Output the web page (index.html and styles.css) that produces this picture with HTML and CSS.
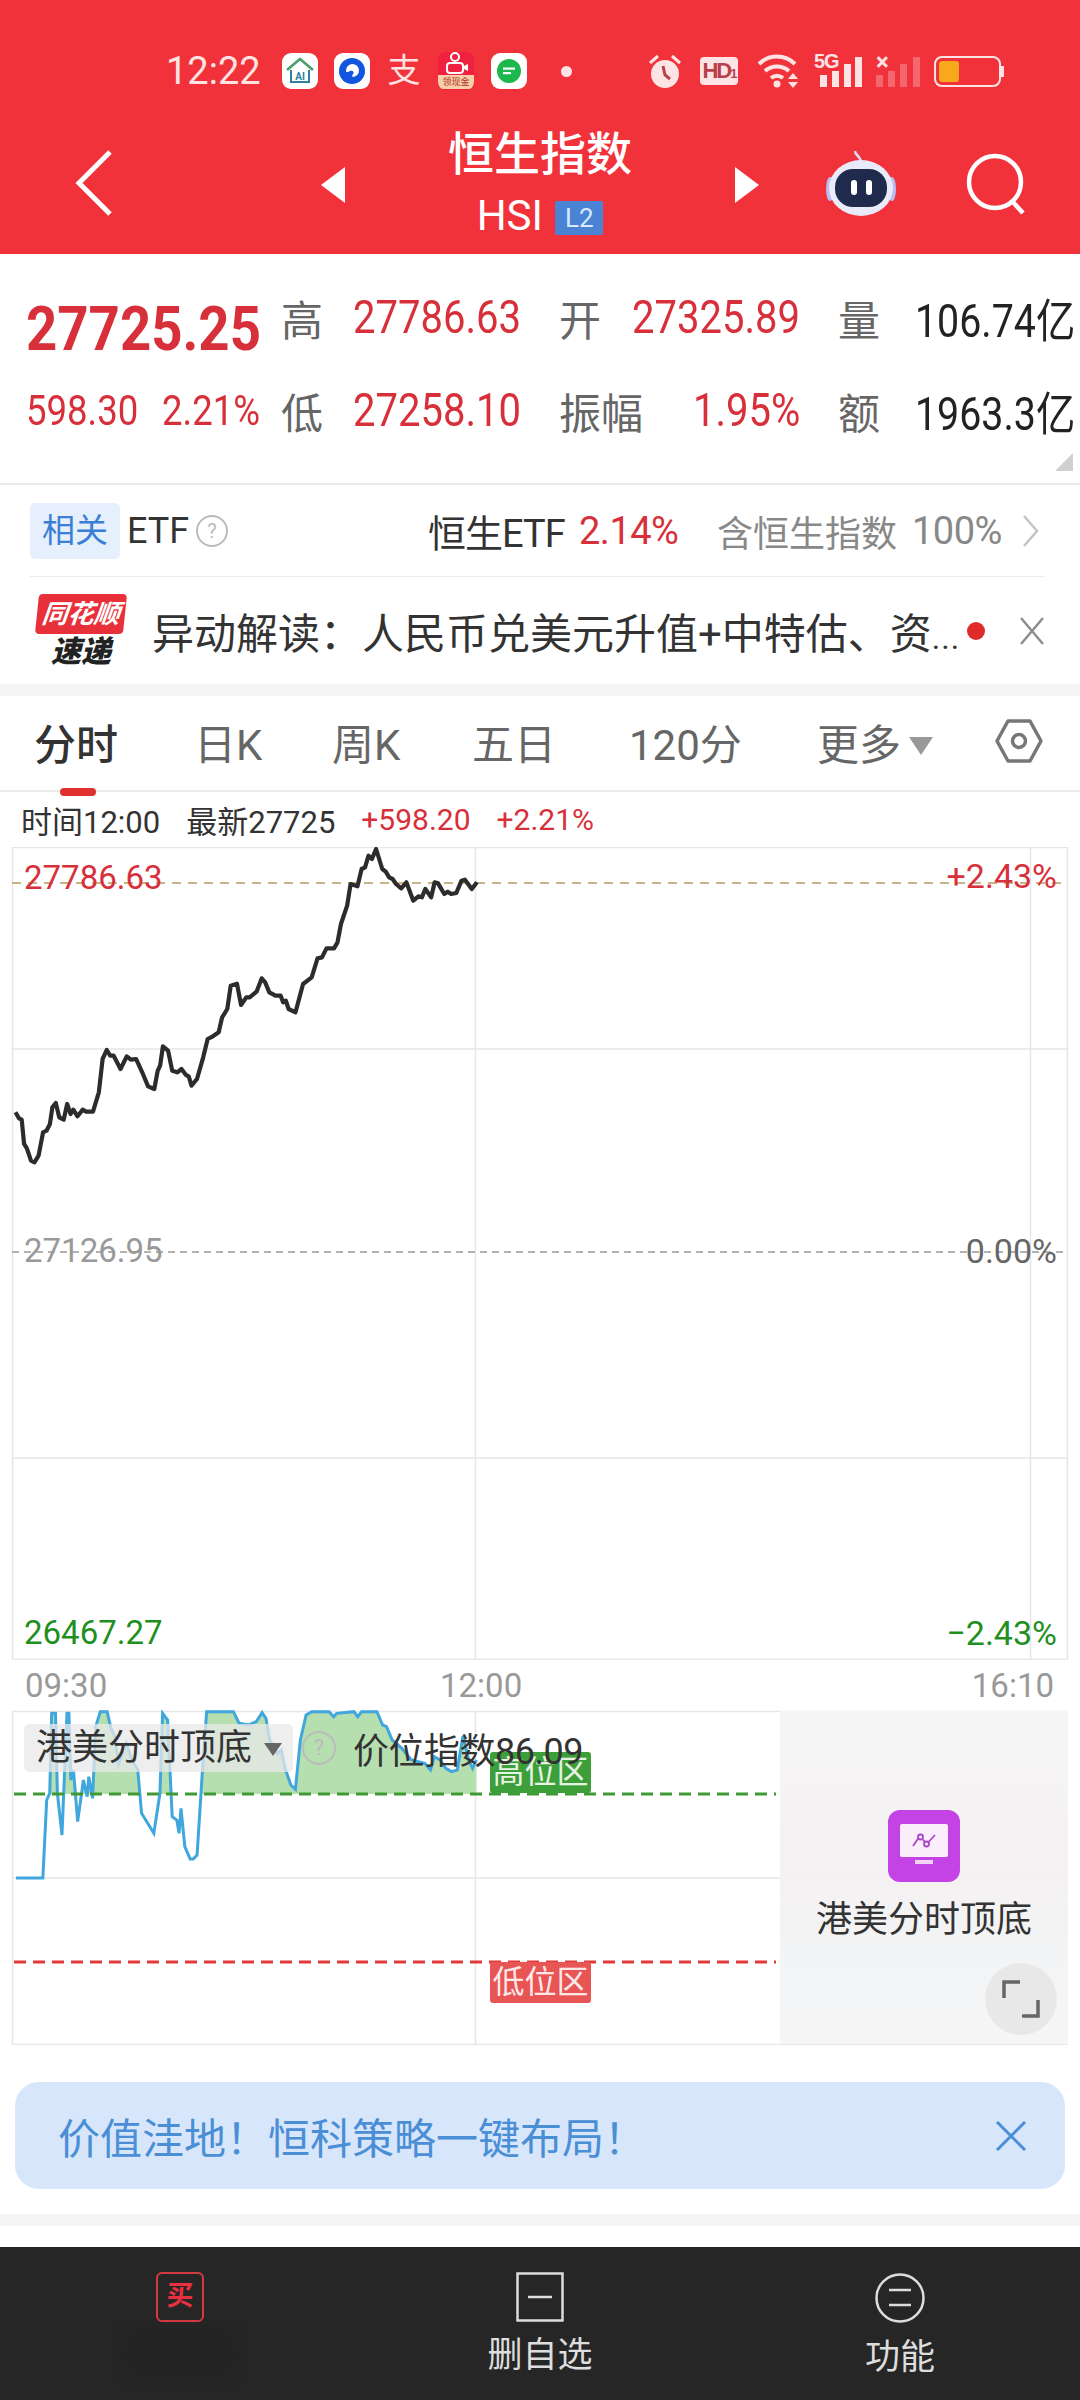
FILE: index.html
```html
<!DOCTYPE html>
<html lang="zh-CN">
<head>
  <meta charset="UTF-8" />
  <meta name="viewport" content="width=device-width, initial-scale=1.0"/>
  <title>恒生指数</title>
  <link rel="stylesheet" href="styles.css">
</head>
<body>

<div class="phone">

  <header class="header">
    <div class="status-bar">
      <span class="clock">12:22</span>
      <div class="notify-icons">
        <span class="app-tile">
          <svg width="30" height="30" viewBox="0 0 30 30"><path d="M2 14 15 3l13 11" fill="none" stroke="#4aa267" stroke-width="2.6"/><path d="M6 14v12h18V14" fill="none" stroke="#2f7f9e" stroke-width="2"/><text x="15" y="24" class="app-ai">AI</text></svg>
        </span>
        <span class="app-tile">
          <svg width="30" height="30" viewBox="0 0 30 30"><circle cx="15" cy="15" r="13" fill="#1256e0"/><path d="M9 15a6.500 6.500 0 1 1 7 6c-1 0-1-2 0-3 2-2-1-4-3-3-2 1-4 2-4 0z" fill="#fff"/></svg>
        </span>
        <span class="alipay">支</span>
        <span class="kuaishou">
          <svg width="30" height="22" viewBox="0 0 30 22"><circle cx="14" cy="5" r="4" fill="none" stroke="#fff" stroke-width="2"/><rect x="6" y="11" width="16" height="10" rx="3" fill="none" stroke="#fff" stroke-width="2"/><path d="m23 14 4-2v7l-4-2z" fill="#fff"/></svg>
          <span class="kuaishou-band">领现金</span>
        </span>
        <span class="app-tile">
          <svg width="30" height="30" viewBox="0 0 30 30"><circle cx="15" cy="15" r="12" fill="#1cb84d"/><rect x="9" y="11.500" width="12" height="2.200" fill="#fff"/><rect x="9" y="16" width="8" height="2.200" fill="#fff"/></svg>
        </span>
        <span class="notify-dot"></span>
      </div>
      <div class="system-icons">
        <svg class="sys-alarm" width="32" height="35" viewBox="0 0 32 35"><circle cx="16" cy="20" r="14" fill="#fde3e3"/><path d="M1 9 9 2M31 9l-8-7" stroke="#fde3e3" stroke-width="3"/><path d="M14 12l2 9 5 4" fill="none" stroke="#b8404a" stroke-width="3"/></svg>
        <span class="sys-hd">HD<small>1</small></span>
        <svg class="sys-wifi" width="43" height="34" viewBox="0 0 43 34"><path d="M2 10C12 0 28 0 38 10M8 17c7-6 17-6 24 0M14 24c4-3 8-3 12 0" fill="none" stroke="#fde3e3" stroke-width="4"/><circle cx="20" cy="30" r="3.500" fill="#fde3e3"/><path d="m36 19 5 6h-10zM36 34l5-6h-10z" fill="#fde3e3"/></svg>
        <span class="sys-signal">
          <span class="sys-5g">5G</span>
          <svg width="48" height="32" viewBox="0 0 48 32"><path d="M6 20h7v12H6zM18 16h7v16h-7zM30 9h7v23h-7zM41 2h7v30h-7z" fill="#fde3e3"/></svg>
        </span>
        <span class="sys-signal off">
          <span class="sys-x">×</span>
          <svg width="44" height="32" viewBox="0 0 44 32"><path d="M0 20h7v12H0zM12 16h7v16h-7zM24 9h7v23h-7zM37 2h7v30h-7z" fill="#fde3e3" opacity=".3"/></svg>
        </span>
        <span class="battery"><span class="battery-level"></span></span>
      </div>
    </div>

    <nav class="nav-bar">
      <svg class="nav-back" width="40" height="68" viewBox="0 0 40 68"><path d="M36 3 5 34l31 31" fill="none" stroke="#fff" stroke-width="5"/></svg>
      <svg class="nav-prev" width="24" height="36" viewBox="0 0 24 36"><path d="M24 0v36L0 18z" fill="#fff"/></svg>
      <div class="nav-title">
        <div class="nav-name">恒生指数</div>
        <div class="nav-code">HSI <span class="l2-badge">L2</span></div>
      </div>
      <svg class="nav-next" width="24" height="36" viewBox="0 0 24 36"><path d="M0 0v36l24-18z" fill="#fff"/></svg>
      <svg class="nav-robot" width="72" height="68" viewBox="0 0 72 68">
        <path d="M36 12C34 6 30 6 30 2" fill="none" stroke="#d8dcf5" stroke-width="2.500"/>
        <ellipse cx="5" cy="40" rx="4" ry="12" fill="#b9bef0"/>
        <ellipse cx="67" cy="40" rx="4" ry="12" fill="#b9bef0"/>
        <ellipse cx="36" cy="39" rx="32" ry="28" fill="#e9ebfb"/>
        <rect x="10" y="20" width="52" height="38" rx="18" fill="#1f2a4d"/>
        <rect x="26" y="31" width="6" height="15" rx="3" fill="#fff"/>
        <rect x="41" y="31" width="6" height="15" rx="3" fill="#fff"/>
      </svg>
      <svg class="nav-search" width="62" height="62" viewBox="0 0 62 62"><circle cx="29" cy="29" r="26" fill="none" stroke="#fff" stroke-width="4.500"/><path d="m46 48 11 12" stroke="#fff" stroke-width="4.500"/></svg>
    </nav>
  </header>

  <section class="quote">
    <div class="quote-row">
      <span class="price">27725.25</span>
      <span class="q-label">高</span>
      <span class="q-value up">27786.63</span>
      <span class="q-wide"><span class="q-label">开</span><span class="q-value up">27325.89</span></span>
      <span class="q-label q-third">量</span>
      <span class="q-value dark">106.74亿</span>
    </div>
    <div class="quote-row">
      <span class="change"><span>598.30</span><span>2.21%</span></span>
      <span class="q-label">低</span>
      <span class="q-value up">27258.10</span>
      <span class="q-wide"><span class="q-label">振幅</span><span class="q-value up">1.95%</span></span>
      <span class="q-label q-third">额</span>
      <span class="q-value dark">1963.3亿</span>
    </div>
    <span class="corner-mark"></span>
  </section>

  <section class="etf-row">
    <span class="etf-badge">相关</span>
    <span class="etf-name">ETF</span>
    <span class="help-icon etf-help">?</span>
    <span class="etf-fund">恒生ETF</span>
    <span class="etf-pct">2.14%</span>
    <span class="etf-hold">含恒生指数</span>
    <span class="etf-share">100%</span>
    <svg width="18" height="34" viewBox="0 0 18 34"><path d="m2 2 13 15L2 32" fill="none" stroke="#c4c4c4" stroke-width="2.500"/></svg>
  </section>

  <section class="news-row">
    <div class="news-logo">
      <div class="news-logo-top"><span>同花顺</span></div>
      <div class="news-logo-bottom">速递</div>
    </div>
    <div class="news-text">异动解读：人民币兑美元升值+中特估、资<span class="dots">...</span></div>
    <span class="news-dot"></span>
    <svg class="news-close" width="26" height="28" viewBox="0 0 26 28"><path d="m2 1 22 26M24 1 2 27" stroke="#8d8d8d" stroke-width="2.500"/></svg>
  </section>

  <div class="band"></div>

  <nav class="tabs">
    <span class="tab active">分时</span>
    <span class="tab tab-rik">日K</span>
    <span class="tab tab-zhouk">周K</span>
    <span class="tab tab-five">五日</span>
    <span class="tab tab-120">120分</span>
    <span class="tab tab-more">更多<i class="more-arrow"></i></span>
    <svg class="tab-setting" width="48" height="44" viewBox="0 0 48 44"><path d="M13 2h22l11 20-11 20H13L2 22z" fill="none" stroke="#777" stroke-width="3.500" stroke-linejoin="round"/><circle cx="24" cy="22" r="6.500" fill="none" stroke="#777" stroke-width="3.500"/></svg>
  </nav>

  <div class="info-row">
    <span class="info-dark">时间12:00</span>
    <span class="info-dark">最新27725</span>
    <span class="info-red">+598.20</span>
    <span class="info-red">+2.21%</span>
  </div>

  <section class="chart">
    <svg class="chart-svg" width="1080" height="813" viewBox="0 848 1080 813">
      <path d="M12.500 848.500H1067.500V1660.500H12.500Z" fill="none" stroke="#e6e6e6" stroke-width="1.500"/>
      <path d="M12 1050H1068M12 1459H1068M475.500 848V1661M1030.500 848V1661" stroke="#e6e6e6" stroke-width="1.500"/>
      <path d="M12 884H1068" stroke="#c9b48a" stroke-width="2" stroke-dasharray="9 7"/>
      <path d="M12 1253H1068" stroke="#999" stroke-width="1.500" stroke-dasharray="7 5"/>
      <g transform="translate(0 690) scale(.34439 .33333)">
        <polyline class="price-line" points="45,1270 55,1288 63,1292 70,1365 78,1378 90,1415 100,1420 112,1400 125,1330 135,1325 145,1305 152,1255 162,1242 172,1285 185,1292 195,1245 205,1275 213,1262 225,1282 240,1262 250,1268 270,1268 287,1210 298,1110 310,1083 320,1100 330,1100 350,1140 368,1102 380,1112 395,1110 415,1155 430,1192 448,1200 458,1145 465,1130 473,1072 488,1085 500,1145 515,1150 527,1140 540,1158 548,1162 556,1190 572,1170 590,1105 603,1050 618,1042 635,1030 645,985 660,960 670,890 688,884 700,948 715,925 725,925 745,908 760,868 770,880 782,910 800,920 815,920 822,940 830,935 838,960 858,970 880,885 905,865 922,808 935,805 948,778 970,778 980,760 990,705 1008,650 1018,585 1038,592 1050,540 1060,535 1070,500 1080,510 1092,480 1110,540 1120,548 1130,565 1140,570 1150,585 1165,598 1180,580 1200,635 1215,622 1225,625 1235,600 1252,625 1262,580 1272,583 1290,615 1300,608 1310,615 1325,612 1340,575 1350,572 1370,600 1385,580"/>
      </g>
    </svg>
    <span class="chart-label high-left">27786.63</span>
    <span class="chart-label high-right">+2.43%</span>
    <span class="chart-label mid-left">27126.95</span>
    <span class="chart-label mid-right">0.00%</span>
    <span class="chart-label low-left">26467.27</span>
    <span class="chart-label low-right">−2.43%</span>
  </section>

  <div class="time-axis">
    <span class="time-start">09:30</span>
    <span class="time-mid">12:00</span>
    <span>16:10</span>
  </div>

  <section class="sub-chart">
    <svg class="chart-svg" width="1080" height="335" viewBox="0 1710 1080 335">
      <path d="M12 1711.500H1068M12 1878H780M12 2044.500H1068M12.500 1711V2045M475.500 1711V2045" stroke="#e6e6e6" stroke-width="1.500"/>
      <g transform="translate(0 1660) scale(.38265 .33333)">
        <clipPath id="above-line"><rect x="0" y="0" width="1568" height="402"/></clipPath>
        <polygon class="sub-fill" clip-path="url(#above-line)" points="42,654 112,654 122,420 130,400 135,160 145,160 150,400 162,525 175,160 180,160 185,360 192,330 203,485 218,360 228,410 232,350 242,415 250,200 262,155 280,155 290,205 300,230 310,310 330,250 345,300 360,330 370,460 402,520 418,400 425,160 438,180 450,470 462,480 468,520 473,445 483,560 497,597 505,597 515,585 528,350 540,155 610,155 625,190 650,195 670,185 685,158 695,175 705,240 725,280 735,270 745,325 760,375 772,388 785,240 800,165 815,155 860,155 872,170 880,160 925,155 935,170 945,155 985,155 1000,195 1010,200 1025,240 1050,265 1075,300 1110,310 1125,330 1135,290 1150,300 1165,325 1180,335 1195,330 1210,228 1225,300 1235,325 1245,300 1245,402 42,402"/>
        <polyline class="sub-line" points="42,654 112,654 122,420 130,400 135,160 145,160 150,400 162,525 175,160 180,160 185,360 192,330 203,485 218,360 228,410 232,350 242,415 250,200 262,155 280,155 290,205 300,230 310,310 330,250 345,300 360,330 370,460 402,520 418,400 425,160 438,180 450,470 462,480 468,520 473,445 483,560 497,597 505,597 515,585 528,350 540,155 610,155 625,190 650,195 670,185 685,158 695,175 705,240 725,280 735,270 745,325 760,375 772,388 785,240 800,165 815,155 860,155 872,170 880,160 925,155 935,170 945,155 985,155 1000,195 1010,200 1025,240 1050,265 1075,300 1110,310 1125,330 1135,290 1150,300 1165,325 1180,335 1195,330 1210,228 1225,300 1235,325 1245,300"/>
      </g>
      <path d="M14 1794H776" stroke="#3f9a35" stroke-width="3" stroke-dasharray="12 7"/>
      <path d="M14 1962H776" stroke="#e23a3a" stroke-width="3" stroke-dasharray="12 7"/>
    </svg>

    <span class="zone zone-high">高位区</span>
    <span class="zone zone-low">低位区</span>
    <div class="sub-head">
      <span class="sub-pill">港美分时顶底<i class="pill-arrow"></i></span>
      <span class="help-icon sub-help">?</span>
      <span class="sub-index">价位指数86.09</span>
    </div>

    <aside class="promo">
      <span class="promo-icon">
        <svg width="48" height="44" viewBox="0 0 48 44">
          <rect x="0" y="0" width="48" height="33" rx="2" fill="#fbeffc"/>
          <rect x="15" y="36" width="18" height="4" fill="#f3d6f7"/>
          <path d="M13 22 18.500 14M23 15.500 24.500 17.500M28.500 18 35 11" fill="none" stroke="#a846c9" stroke-width="1.800"/>
          <circle cx="20.500" cy="13" r="2.500" fill="none" stroke="#a846c9" stroke-width="1.800"/>
          <circle cx="26.500" cy="20" r="2.500" fill="none" stroke="#a846c9" stroke-width="1.800"/>
        </svg>
      </span>
      <span class="promo-name">港美分时顶底</span>
      <span class="expand-btn">
        <svg width="38" height="38" viewBox="0 0 38 38"><path d="M2 18V2h16M36 20v16H20" fill="none" stroke="#666" stroke-width="3.500"/></svg>
      </span>
    </aside>
  </section>

  <section class="banner">
    <span class="banner-text">价值洼地！恒科策略一键布局！</span>
    <svg width="32" height="30" viewBox="0 0 32 30"><path d="m2 1 28 28M30 1 2 29" stroke="#4a8ed6" stroke-width="3"/></svg>
  </section>

  <div class="band band-bottom"></div>

  <footer class="bottom-bar">
    <div class="bottom-item">
      <span class="buy-icon">买</span>
      <span class="bottom-smudge"></span>
    </div>
    <div class="bottom-item">
      <svg width="48" height="50" viewBox="0 0 48 50"><rect x="1.500" y="1.500" width="45" height="47" fill="none" stroke="#ddd" stroke-width="2.500"/><path d="M12 25h24" stroke="#ddd" stroke-width="2.500"/></svg>
      <span class="bottom-label">删自选</span>
    </div>
    <div class="bottom-item">
      <svg width="50" height="52" viewBox="0 0 50 52"><circle cx="25" cy="26" r="23.500" fill="none" stroke="#ddd" stroke-width="2.500"/><path d="M14 18h22M14 33h22" stroke="#ddd" stroke-width="2.500"/></svg>
      <span class="bottom-label">功能</span>
    </div>
  </footer>

</div>

</body>
</html>
```

FILE: styles.css
```css
* {
  box-sizing: border-box;
}

body {
  margin: 0;
  background: #fff;
  font-family: Roboto, "Noto Sans CJK SC", sans-serif;
  color: #333;
}

.phone {
  width: 1080px;
  height: 2400px;
  overflow: hidden;
  display: flex;
  flex-direction: column;
}

/* header */
.header {
  height: 254px;
  background: #f1323b;
  color: #fff;
  padding-top: 50px;
}

.status-bar {
  height: 42px;
  display: flex;
  align-items: center;
  padding-left: 166px;
}

.clock {
  width: 116px;
  font-size: 38px;
  color: #fde3e3;
}

.notify-icons {
  display: flex;
  align-items: center;
  width: 367px;
}

.app-tile {
  width: 36px;
  height: 36px;
  margin-right: 16px;
  background: #fff;
  border-radius: 9px;
  display: flex;
  align-items: center;
  justify-content: center;
}

.app-ai {
  font-size: 10px;
  font-weight: 700;
  fill: #2f7f9e;
  text-anchor: middle;
}

.alipay {
  width: 36px;
  margin-right: 16px;
  font-size: 33px;
  line-height: 36px;
  color: #fde3e3;
  text-align: center;
}

.kuaishou {
  width: 36px;
  height: 38px;
  margin-right: 17px;
  border-radius: 8px;
  background: #ef2040;
  display: flex;
  flex-direction: column;
  align-items: center;
  overflow: hidden;
}

.kuaishou-band {
  width: 100%;
  height: 14px;
  margin-top: 1px;
  background: #f7cfa8;
  color: #b2302c;
  font-size: 9px;
  line-height: 14px;
  text-align: center;
  white-space: nowrap;
}

.notify-dot {
  width: 11px;
  height: 11px;
  margin-left: 18px;
  border-radius: 50%;
  background: #fde3e3;
}

.system-icons {
  display: flex;
  align-items: center;
}

.sys-alarm {
  margin-right: 19px;
}

.sys-hd {
  width: 38px;
  height: 28px;
  margin-right: 19px;
  border-radius: 4px;
  background: #fde3e3;
  color: #b8404a;
  font-family: "Liberation Sans", sans-serif;
  font-size: 22px;
  font-weight: 700;
  line-height: 28px;
  letter-spacing: -2px;
  text-align: center;
}

.sys-hd small {
  font-size: 13px;
}

.sys-wifi {
  margin-right: 14px;
}

.sys-signal {
  position: relative;
  display: flex;
  margin-right: 14px;
}

.sys-5g {
  position: absolute;
  left: 0;
  top: -5px;
  color: #fde3e3;
  font-family: "Liberation Sans", sans-serif;
  font-size: 20px;
  font-weight: 700;
  letter-spacing: -1px;
}

.sys-x {
  position: absolute;
  left: 0;
  top: -7px;
  color: #fde3e3;
  font-size: 24px;
  font-weight: 700;
}

.battery {
  width: 67px;
  height: 31px;
  border: 2px solid #fde3e3;
  border-radius: 8px;
  padding: 3px;
  position: relative;
}

.battery::after {
  content: "";
  position: absolute;
  right: -5px;
  top: 8px;
  width: 3px;
  height: 11px;
  background: #fde3e3;
}

.battery-level {
  display: block;
  width: 20px;
  height: 100%;
  border-radius: 3px;
  background: #f7a81b;
}

.nav-bar {
  position: relative;
  height: 162px;
}

.nav-back,
.nav-prev,
.nav-next,
.nav-robot,
.nav-search {
  position: absolute;
}

.nav-back { left: 74px; top: 57px; }
.nav-prev { left: 321px; top: 75px; }
.nav-next { left: 735px; top: 75px; }
.nav-robot { left: 825px; top: 57px; }
.nav-search { left: 966px; top: 61px; }

.nav-title {
  position: absolute;
  left: 0;
  right: 0;
  top: 34px;
  text-align: center;
}

.nav-name {
  font-size: 46px;
  line-height: 56px;
  font-weight: 500;
}

.nav-code {
  margin-top: 11px;
  font-size: 42px;
  line-height: 46px;
}

.l2-badge {
  display: inline-block;
  width: 48px;
  height: 34px;
  margin-left: 2px;
  background: #4a82d4;
  border-radius: 2px;
  font-size: 26px;
  line-height: 34px;
  vertical-align: 3px;
  color: #d9e8fb;
}

/* quote numbers */
.quote {
  position: relative;
  height: 231px;
  padding-top: 38px;
  border-bottom: 2px solid #e8e8e8;
}

.quote-row {
  display: flex;
  align-items: center;
  height: 50px;
  margin-bottom: 43px;
  padding-left: 26px;
  white-space: nowrap;
}

.quote-row > * {
  flex: none;
}

.price {
  width: 255px;
  margin-top: 22px;
  font-size: 62px;
  font-weight: 700;
  color: #d8303a;
  transform: scaleX(.88);
  transform-origin: left;
}

.change {
  width: 255px;
  display: flex;
  font-size: 42px;
  color: #d8303a;
}

.change span {
  transform: scaleX(.87);
  transform-origin: left;
}

.change span:first-child {
  width: 136px;
}

.quote .q-label {
  width: 72px;
  font-size: 42px;
  color: #666;
}

.q-value {
  width: 206px;
  font-size: 46px;
  transform: scaleX(.87);
  transform-origin: left;
}

.q-wide {
  width: 241px;
  display: flex;
  align-items: center;
  justify-content: space-between;
}

.quote .q-wide .q-label {
  width: auto;
}

.q-wide .q-value {
  width: auto;
  transform-origin: right;
}

.q-value.up {
  color: #d8303a;
}

.q-value.dark {
  width: auto;
  color: #222;
  transform: scaleX(.855);
}

.quote .q-third {
  width: 77px;
  margin-left: 38px;
}

.corner-mark {
  position: absolute;
  right: 7px;
  top: 199px;
  width: 0;
  height: 0;
  border-left: 18px solid transparent;
  border-bottom: 18px solid #d0d0d0;
}

/* etf row */
.etf-row {
  height: 92px;
  margin-left: 30px;
  margin-right: 35px;
  display: flex;
  align-items: center;
  border-bottom: 1.500px solid #ececec;
  font-size: 38px;
  white-space: nowrap;
}

.etf-badge {
  width: 90px;
  height: 56px;
  background: #e6effc;
  border-radius: 5px;
  color: #3a7fd5;
  font-size: 33px;
  line-height: 56px;
  text-align: center;
}

.etf-name {
  width: 76px;
  padding-left: 7px;
  font-size: 36px;
  color: #333;
}

.help-icon {
  border: 2px solid #bbb;
  border-radius: 50%;
  color: #bbb;
  text-align: center;
}

.etf-help {
  width: 32px;
  height: 32px;
  margin-right: 200px;
  font-size: 20px;
  line-height: 28px;
}

.etf-fund {
  width: 151px;
  color: #333;
  letter-spacing: -1px;
}

.etf-pct {
  width: 138px;
  color: #d8303a;
  letter-spacing: -.5px;
}

.etf-hold {
  width: 195px;
  color: #888;
  font-size: 36px;
}

.etf-share {
  width: 110px;
  color: #888;
  letter-spacing: -.5px;
}

/* news row */
.news-row {
  height: 107px;
  display: flex;
  align-items: center;
  padding-left: 37px;
  white-space: nowrap;
}

.news-logo {
  width: 88px;
  margin-right: 27px;
}

.news-logo-top {
  height: 40px;
  background: #e8303a;
  border-radius: 4px;
  transform: skewX(-6deg);
  color: #fff;
  font-size: 26px;
  font-weight: 700;
  font-style: italic;
  line-height: 40px;
  text-align: center;
}

.news-logo-bottom {
  margin-top: 2px;
  height: 32px;
  color: #222;
  font-size: 30px;
  font-weight: 900;
  font-style: italic;
  line-height: 32px;
  text-align: center;
}

.news-text {
  width: 813px;
  font-size: 42px;
  color: #333;
}

.dots {
  font-size: 32px;
  letter-spacing: 1px;
}

.news-dot {
  width: 18px;
  height: 18px;
  margin-left: 2px;
  border-radius: 50%;
  background: #e02b2b;
}

.news-close {
  margin-left: 34px;
}

.band {
  height: 12px;
  background: #f5f5f5;
}

/* tabs */
.tabs {
  position: relative;
  height: 96px;
  border-bottom: 2px solid #ebebeb;
  display: flex;
  align-items: center;
  padding-left: 34px;
  padding-bottom: 4px;
}

.tab {
  font-size: 42px;
  color: #666;
  white-space: nowrap;
}

.tab.active {
  width: 160px;
  color: #333;
  font-weight: 500;
  position: relative;
}

.tab.active::after {
  content: "";
  position: absolute;
  left: 26px;
  bottom: -24px;
  width: 36px;
  height: 8px;
  border-radius: 4px;
  background: #e03030;
}

.tab-rik { width: 138px; }
.tab-zhouk { width: 140px; }
.tab-five { width: 157px; }
.tab-120 { width: 188px; }
.tab-more { width: 178px; }

.more-arrow {
  display: inline-block;
  margin-left: 8px;
  border-left: 12px solid transparent;
  border-right: 12px solid transparent;
  border-top: 18px solid #999;
  vertical-align: 5px;
}

/* chart */
.info-row {
  height: 55px;
  display: flex;
  align-items: center;
  gap: 26px;
  padding-left: 21px;
  font-size: 31px;
  white-space: nowrap;
}

.info-dark {
  color: #333;
}

.info-red {
  color: #d8303a;
  font-size: 30px;
}

.chart {
  position: relative;
  height: 813px;
}

.chart-svg {
  position: absolute;
  left: 0;
  top: 0;
}

.price-line {
  fill: none;
  stroke: #2c2c2c;
  stroke-width: 4.200px;
  stroke-linejoin: round;
  vector-effect: non-scaling-stroke;
}

.sub-fill {
  fill: #b6dfb0;
}

.sub-line {
  fill: none;
  stroke: #3fa7dd;
  stroke-width: 3px;
  vector-effect: non-scaling-stroke;
}

.chart-label {
  position: absolute;
  font-size: 33px;
  line-height: 40px;
}

.high-left { left: 24px; top: 11px; color: #d8303a; }
.high-right { right: 23px; top: 9px; color: #d8303a; font-size: 34px; }
.mid-left { left: 24px; top: 384px; color: #999; }
.mid-right { right: 23px; top: 384px; color: #666; font-size: 34px; }
.low-left { left: 24px; top: 766px; color: #1f8f1f; }
.low-right { right: 23px; top: 766px; color: #1f8f1f; font-size: 34px; }

.time-axis {
  height: 50px;
  display: flex;
  align-items: center;
  padding: 0 26px 0 25px;
  font-size: 33px;
  color: #999;
}

.time-start {
  width: 415px;
}

.time-mid {
  flex: 1;
}

.sub-chart {
  position: relative;
  height: 335px;
}

.sub-head {
  position: absolute;
  left: 24px;
  top: 12px;
  display: flex;
  align-items: center;
  white-space: nowrap;
}

.sub-pill {
  width: 269px;
  height: 48px;
  padding-left: 12px;
  background: rgba(232, 232, 232, .75);
  border-radius: 5px;
  font-size: 36px;
  line-height: 48px;
  color: #333;
}

.pill-arrow {
  display: inline-block;
  margin-left: 12px;
  border-left: 9px solid transparent;
  border-right: 9px solid transparent;
  border-top: 13px solid #666;
  vertical-align: 4px;
}

.sub-help {
  width: 34px;
  height: 34px;
  margin-left: 9px;
  font-size: 22px;
  line-height: 30px;
}

.sub-index {
  margin-left: 17px;
  font-size: 36px;
  letter-spacing: -.5px;
  color: #333;
}

.zone {
  position: absolute;
  left: 490px;
  width: 101px;
  height: 41px;
  border-radius: 3px;
  color: #e6f3e2;
  font-size: 32px;
  line-height: 41px;
  text-align: center;
}

.zone-high {
  top: 42px;
  background: #3c9f3a;
}

.zone-low {
  top: 252px;
  background: #e85555;
  color: #fde8e8;
}

.promo {
  position: absolute;
  left: 780px;
  top: 1px;
  width: 288px;
  height: 333px;
  background: linear-gradient(180deg, #f5f5f6 0%, #f6f1f2 45%, #f2f4f5 75%, #f6f6f7 100%);
  display: flex;
  flex-direction: column;
  align-items: center;
  padding-top: 99px;
}

.promo-icon {
  width: 72px;
  height: 72px;
  border-radius: 12px;
  background: #c443e4;
  display: flex;
  align-items: center;
  justify-content: center;
}

.promo-name {
  margin-top: 14px;
  font-size: 36px;
  line-height: 48px;
  color: #333;
  white-space: nowrap;
}

.expand-btn {
  position: absolute;
  left: 205px;
  top: 252px;
  width: 72px;
  height: 72px;
  border-radius: 50%;
  background: #e8e8e8;
  display: flex;
  align-items: center;
  justify-content: center;
}

/* banner */
.banner {
  height: 107px;
  margin: 37px 15px 0;
  padding: 0 38px 0 43px;
  border-radius: 24px;
  background: #d7e6fa;
  display: flex;
  align-items: center;
  justify-content: space-between;
  color: #4a8ed6;
  font-size: 42px;
}

.band-bottom {
  margin-top: 25px;
}

.bottom-bar {
  margin-top: 21px;
  flex: 1;
  background: #262626;
  display: grid;
  grid-template-columns: 360px 360px 360px;
  padding-top: 25px;
}

.bottom-item {
  display: flex;
  flex-direction: column;
  align-items: center;
}

.bottom-label {
  margin-top: 11px;
  font-size: 35px;
  line-height: 46px;
  color: #ddd;
}

.buy-icon {
  width: 48px;
  height: 50px;
  border: 2.500px solid #d33a3f;
  border-radius: 6px;
  color: #e8303f;
  font-size: 27px;
  font-weight: 700;
  line-height: 44px;
  text-align: center;
}

.bottom-smudge {
  margin-top: 11px;
  width: 110px;
  height: 40px;
  background: #232323;
  filter: blur(6px);
}
```
